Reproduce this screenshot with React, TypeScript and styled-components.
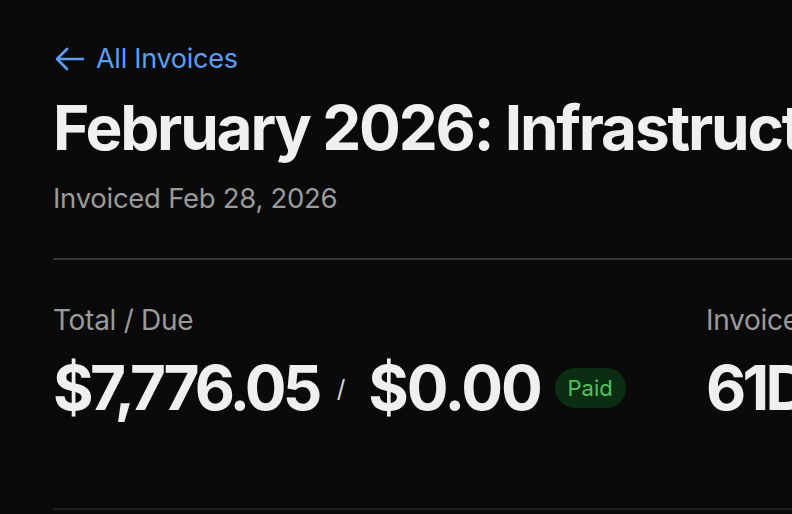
import React from 'react'
import styled, { createGlobalStyle } from 'styled-components'

const GlobalStyle = createGlobalStyle`
  html, body {
    margin: 0;
    padding: 0;
    background: #0a0a0a;
    overflow: hidden;
  }
  body {
    font-family: Inter, 'Noto Sans', sans-serif;
    color: #efefef;
  }
`

const Page = styled.div`
  width: 792px;
  height: 514px;
  overflow: hidden;
  box-sizing: border-box;
  padding: 44px 0 0 53px;
`

const Content = styled.div`
  width: 1100px;
  height: 466px;
  box-sizing: border-box;
  border-bottom: 2px solid #1f1f1f;
`

const BackLink = styled.a`
  display: inline-flex;
  align-items: center;
  gap: 11px;
  color: #5b9ef4;
  font-size: 27px;
  line-height: 30px;
  text-decoration: none;
  letter-spacing: -0.01em;
`

const Arrow = styled.svg`
  width: 30px;
  height: 26px;
  margin-left: 2px;
  flex-shrink: 0;
`

const Title = styled.h1`
  margin: 16px 0 0;
  font-size: 62px;
  line-height: 72px;
  font-weight: 700;
  letter-spacing: -0.035em;
  white-space: nowrap;
  color: #f0f0f0;
`

const Subtitle = styled.div`
  margin-top: 17px;
  font-size: 27.5px;
  line-height: 34px;
  color: #9a9a9a;
  letter-spacing: -0.01em;
`

const Divider = styled.hr`
  margin: 43px 0 0;
  border: none;
  border-top: 2px solid #383838;
`

const Stats = styled.div`
  display: grid;
  grid-template-columns: 653px 1fr;
  margin-top: 43px;
`

const Stat = styled.div`
  display: flex;
  flex-direction: column;
  gap: 15px;
`

const Label = styled.div`
  font-size: 28px;
  line-height: 34px;
  color: #9a9a9a;
  letter-spacing: -0.01em;
  white-space: nowrap;
`

const ValueRow = styled.div`
  display: flex;
  align-items: center;
  white-space: nowrap;
`

const Amount = styled.span<{ $spacing?: number }>`
  font-size: 62px;
  line-height: 72px;
  font-weight: 700;
  letter-spacing: ${({ $spacing }) => $spacing ?? -0.06}em;
  color: #efefef;
`

const Slash = styled.span`
  font-size: 24px;
  color: #d8d8d8;
  margin: 0 23px 0 18px;
`

const Badge = styled.span`
  margin-left: 14px;
  height: 40px;
  padding: 0 13px;
  border-radius: 20px;
  background: #0b2e12;
  color: #4fc25d;
  font-size: 22px;
  display: inline-flex;
  align-items: center;
`

export default function App() {
  return (
    <>
      <GlobalStyle />
      <Page>
        <Content>
          <BackLink href="#">
            <Arrow viewBox="0 0 30 26" fill="none" stroke="currentColor" strokeWidth={2.6} strokeLinecap="round" strokeLinejoin="round">
              <path d="M28 13H2M12 3L2 13l10 10" />
            </Arrow>
            All Invoices
          </BackLink>
          <Title>February 2026: Infrastructure</Title>
          <Subtitle>Invoiced Feb 28, 2026</Subtitle>
          <Divider />
          <Stats>
            <Stat>
              <Label>Total / Due</Label>
              <ValueRow>
                <Amount>$7,776.05</Amount>
                <Slash>/</Slash>
                <Amount $spacing={-0.035}>$0.00</Amount>
                <Badge>Paid</Badge>
              </ValueRow>
            </Stat>
            <Stat>
              <Label>Invoice Number</Label>
              <ValueRow>
                <Amount>61D4A7E2-0012</Amount>
              </ValueRow>
            </Stat>
          </Stats>
        </Content>
      </Page>
    </>
  )
}
